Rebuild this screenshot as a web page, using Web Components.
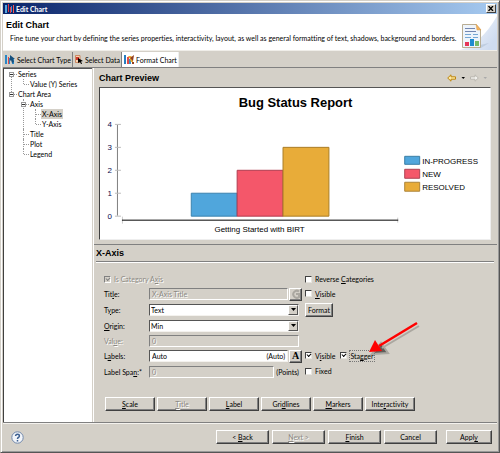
<!DOCTYPE html>
<html lang="en">
<head>
<meta charset="utf-8">
<title>Edit Chart</title>
<style>
  html, body { margin: 0; min-height: 100%; background: #d4d0c8; }
  body { font: 7px/10px Lato, "Noto Sans", sans-serif; font-variant-ligatures: none; color: #000; }
</style>
</head>
<body>
<edit-dialog></edit-dialog>
<script>
const base = `*{box-sizing:border-box} u{text-decoration-thickness:1px;text-underline-offset:1px}
  button,input,select{font:inherit;color:inherit;margin:0}
  h1,h2,p,ul{margin:0;padding:0;font-size:inherit;font-weight:inherit}
  svg{display:block;flex:none}`;
function define(name, css, html) {
  const t = document.createElement('template');
  t.innerHTML = `<style>${base}${css}</style>${html}`;
  customElements.define(name, class extends HTMLElement {
    constructor() {
      super();
      this.attachShadow({ mode: 'open' }).append(t.content.cloneNode(true));
    }
    connectedCallback() {
      const control = this.shadowRoot.querySelector('[data-control]');
      if (!control) return;
      control.disabled = this.hasAttribute('disabled');
      control.checked = this.hasAttribute('checked');
    }
  });
}

define('push-button', `
  :host{display:block;height:14px}
  button{display:flex;align-items:center;justify-content:center;width:100%;height:100%;padding:0;background:#d4d0c8;white-space:nowrap;
    border:1px solid;border-color:#fff #404040 #404040 #fff;box-shadow:inset -1px -1px #808080}
  button:disabled{color:#8c8983;text-shadow:1px 1px #fff}`,
  `<button type="button" data-control><span><slot></slot></span></button>`);

define('check-box', `
  :host{display:block}
  label{display:inline-flex;align-items:center;gap:3px;white-space:nowrap}
  input{appearance:none;position:relative;width:7px;height:7px;background:#fff;border:1px solid;border-color:#404040 #e8e6e0 #e8e6e0 #404040}
  input:checked::before{content:"";position:absolute;left:1px;top:0;width:3px;height:2px;border:solid #000;border-width:0 0 1px 1px;transform:rotate(-45deg)}
  input:disabled{background:#d4d0c8;border-color:#808080 #fff #fff #808080}
  input:disabled:checked::before{border-color:#808080}
  input:disabled+span{color:#8c8983;text-shadow:1px 1px #fff}
  :host([focused]) span{outline:1px dotted #777}`,
  `<label><input type="checkbox" data-control><span><slot></slot></span></label>`);

define('title-bar', `
  :host{display:flex;align-items:center;height:11px;padding:0 1px 0 2px;gap:2px;color:#fff;font-weight:bold;
    background:linear-gradient(90deg,#0a246a,#a6caf0)}
  h1{flex:1}
  button{display:grid;place-items:center;width:10px;height:9px;padding:0;background:#d4d0c8;border:1px solid;border-color:#fff #404040 #404040 #fff}`,
  `<svg width="9" height="9" viewBox="0 0 9 9" aria-hidden="true"><path fill="#55a6df" d="M0 1h2v8H0z"/><path fill="#e03c48" d="M3 0h1v8H3zM5 3h1v6H5z"/><path fill="#4b8ed0" d="M6 2h1v6H6z"/><path fill="#fa5a50" d="M8 1h1v8H8z"/></svg>
  <h1>Edit Chart</h1>
  <button type="button" aria-label="Close"><svg width="6" height="5" viewBox="0 0 6 5"><path d="M.5 0 5 5M5 0 .5 5" stroke="#000" stroke-width="1.3"/></svg></button>`);

define('dialog-header', `
  :host{display:flex;justify-content:space-between;align-items:flex-end;height:37px;background:#fff;border-bottom:1px solid #f0eee9}
  div{flex:1;min-width:0;padding:0 0 7px 3px}
  h2{font:bold 9px/12px "Liberation Sans",sans-serif;margin-bottom:2px}
  p{padding-left:4px;white-space:nowrap}`,
  `<div><h2>Edit Chart</h2><p>Fine tune your chart by defining the series properties, interactivity, layout, as well as general formatting of text, shadows, background and borders.</p></div>
  <svg width="42" height="34" viewBox="0 0 42 34" aria-hidden="true">
    <defs><linearGradient id="g" x1="0" y1="0" x2="1" y2=".6"><stop offset="0" stop-color="#fff"/><stop offset="1" stop-color="#cfdcf0"/></linearGradient></defs>
    <path fill="url(#g)" d="M42 0v34H5Q26 28 42 0z"/><path fill="#a5b5cc" opacity=".45" d="m25 29 9-2-8 5H9z"/>
    <path fill="#eef4fb" stroke="#b9ad93" d="M7.500 8.500H21l4.500 5V31.500h-18z"/><path fill="#f5b45c" stroke="#d89b4d" stroke-width=".5" d="m21 8 5 6h-4z"/>
    <path fill="#7386b0" d="M10 12h10v1H10zm0 3h11v1H10z"/><path fill="#76a7d4" d="M10 18h6v1h-6zm8 0h5v1h-5zm-8 3h6v1h-6zm8 0h5v1h-5z"/>
    <path fill="#e63558" d="M10 26h4v4h-4z"/><path fill="#1e8bd0" d="M15 23h4v7h-4z"/><path fill="#75ba68" d="M20 25h4v5h-4z"/>
  </svg>`);

define('tab-strip', `
  :host{display:flex;height:17px;padding-top:1px;border-bottom:1px solid #808080}
  button{display:flex;align-items:center;gap:2px;height:15px;border:0;border-right:1px solid #808080;background:none;padding:0 1px 0 2px;white-space:nowrap}
  button[aria-selected=true]{background:#fff;border-color:#eee}`,
  `<button type="button" role="tab"><svg width="10" height="9" viewBox="0 0 10 9"><path fill="#2a86c5" d="M0 0h2v9H0z"/><path fill="#e0464a" d="M3 2h1v7H3z"/><path fill="#2a86c5" d="M4 3h1v6H4zM7 4h2v5H7z"/><path fill="#164f7c" d="m5 0 5 4H8l1 3-2 1-1-3-1 1z"/></svg>Select Chart Type</button>
  <button type="button" role="tab"><svg width="8" height="9" viewBox="0 0 8 9"><path fill="#f8d4b5" stroke="#c7774a" stroke-width=".8" d="M.5.500h4.500v7H.5z"/><path fill="#d03c31" d="M1 2h3v3H1z"/><path d="m3 3 5 3-2 .5L7 9H6L5 7 3 8z"/></svg>Select Data</button>
  <button type="button" role="tab" aria-selected="true"><svg width="10" height="9" viewBox="0 0 10 9"><path fill="#297ec0" d="M0 0h2v9H0z"/><path fill="#e24c46" d="M3 2h2v7H3z"/><path fill="#3593c9" d="M5 4h2v5H5z"/><path fill="#edab2d" d="M4 1h3l2 2v4H7L6 4z"/><path fill="#923e20" d="m6 3 4-3-1 6zM8 7h2v2H8z"/></svg>Format Chart</button>`);

define('tree-view', `
  :host{display:block;background:#fff;border-left:1px solid #404040;border-top:1px solid #555;padding-left:5px}
  ul{list-style:none} li{position:relative}
  ul ul{padding-left:12px}
  li>span{display:inline-block;height:10px;margin-left:8px;padding:0 1px;white-space:nowrap}
  li::before{content:"";position:absolute;left:2px;top:0;height:100%;border-left:1px dotted #999}
  li:last-child::before{height:5px}
  li::after{content:"";position:absolute;left:3px;top:5px;width:5px;border-top:1px dotted #999}
  .root>li:first-child::before{top:5px}
  i{position:absolute;z-index:1;left:0;top:3px;width:5px;height:5px;background:#fff;border:1px solid #999}
  i::after{content:"";position:absolute;left:0;right:0;top:1px;height:1px;background:#333}
  .sel{background:#d4d0c8}`,
  `<ul class="root" role="tree">
    <li><i></i><span>Series</span><ul><li><span>Value (Y) Series</span></li></ul></li>
    <li><i></i><span>Chart Area</span><ul>
      <li><i></i><span>Axis</span><ul><li><span class="sel">X-Axis</span></li><li><span>Y-Axis</span></li></ul></li>
      <li><span>Title</span></li><li><span>Plot</span></li><li><span>Legend</span></li></ul></li>
  </ul>`);

define('chart-preview', `
  :host{display:block;padding:0 6px 4px 5px;border-bottom:1px solid #808080}
  header{display:flex;align-items:center;height:19px;padding-right:2px}
  h2{flex:1;font:bold 9px/12px "Liberation Sans",sans-serif}
  .canvas{background:#fff;border:1px solid;border-color:#555 #eee #eee #404040}
  .canvas svg{width:100%;height:auto}
  text{font:8px "Liberation Sans",Arial,sans-serif}
  .num text{fill:#0a0a50;text-anchor:end}
  .title{font-size:13px;font-weight:bold}`,
  `<header><h2>Chart Preview</h2>
    <svg width="42" height="8" viewBox="0 0 42 8" aria-hidden="true"><path fill="#ffeaa0" stroke="#bd8510" d="M.7 4 4 .8v2h4.500v2.400H4v2z"/><path d="M14.500 3h3.500l-1.750 2z"/><path fill="#f1f0ec" stroke="#bab7b0" d="M31.300 4 28 .8v2h-4.500v2.400H28v2z"/><path fill="#aaa" d="M36.500 3h3.500l-1.750 2z"/></svg>
  </header>
  <div class="canvas"><svg viewBox="0 0 391 151" role="img" aria-label="Bug Status Report">
    <text class="title" x="196" y="19" text-anchor="middle">Bug Status Report</text>
    <path d="M17.500 37v91" stroke="#808080" fill="none"/><path d="M15 36.500h6M15 59.500h6M15 82.500h6M15 105.500h6M15 128.500h6" stroke="#bbb"/>
    <g class="num"><text x="12" y="39">4</text><text x="12" y="62">3</text><text x="12" y="85">2</text><text x="12" y="108">1</text><text x="12" y="131">0</text></g>
    <path fill="#50a6dc" stroke="#3b83ae" d="M91.500 105.500h46v23h-46z"/><path fill="#f4576a" stroke="#b03c50" d="M137.500 82.500h46v46h-46z"/><path fill="#e8ac39" stroke="#aa7d26" d="M183.500 59.500h46v69h-46z"/>
    <path d="M22.500 129v7M298.500 130v5" stroke="#ccc"/><path d="M22 132.500h277" stroke="#000"/>
    <text x="160" y="144" text-anchor="middle">Getting Started with BIRT</text>
    <path fill="#50a6dc" stroke="#397da6" d="M305.500 68.500h15v8h-15z"/><path fill="#f4576a" stroke="#ad4354" d="M305.500 81.500h15v9h-15z"/><path fill="#e8ac39" stroke="#ac8439" d="M305.500 94.500h15v9h-15z"/>
    <text x="323" y="76">IN-PROGRESS</text><text x="323" y="89">NEW</text><text x="323" y="102">RESOLVED</text>
  </svg></div>`);

define('axis-form', `
  :host{display:block;padding:0 3px 0 2px}
  h2{font:bold 9px/12px "Liberation Sans",sans-serif;padding:2px 0;border-bottom:1px solid #808080;box-shadow:0 1px #fff}
  form{display:grid;grid-template-columns:45px 150px 1fr;grid-template-rows:14px 15px 16px 16px 15px 15px 16px;column-gap:3px;align-items:center;padding:11px 0 0 8px}
  .wide{grid-column:1/3}
  .end{grid-column:3}
  .field{display:flex;align-items:center;gap:1px;height:12px;margin-left:-3px}
  .box{display:flex;flex:1;min-width:0;height:12px;background:#fff;border:1px solid;border-color:#555 #f4f2ee #f4f2ee #555;padding:0 2px}
  .box input{flex:1;width:100%;min-width:0;height:10px;padding:0;border:0;background:none;outline:0}
  .off{background:#d4d0c8;border-color:#808080 #fff #fff #808080}
  .short{margin-right:3px}
  input:disabled,.dis{color:#8c8983;text-shadow:1px 1px #fff}
  .combo{display:grid;grid-template-columns:1fr 10px;padding:0;align-items:center}
  select{grid-area:1/1/2/3;appearance:none;width:100%;height:10px;border:0;background:none;padding:0 1px;outline:0}
  .combo i{grid-area:1/2;display:grid;place-items:center;height:10px;background:#d4d0c8;border:1px solid;border-color:#fff #555 #555 #fff;pointer-events:none}
  .mini{flex:none;width:13px;height:13px}
  .mini b{font:bold 10px/10px "Liberation Serif",serif}
  .pair{display:flex;gap:5px}
  .target{position:relative}
  .target svg{position:absolute;left:29px;bottom:4px;overflow:visible;pointer-events:none}
  .fmt{width:28px}
  nav{display:flex;gap:2px;padding:17px 0 8px 9px}
  nav push-button{width:50px}`,
  `<h2>X-Axis</h2>
  <form>
    <check-box class="wide" checked disabled>Is Category A<u>x</u>is</check-box><check-box class="end">Reverse <u>C</u>ategories</check-box>
    <label for="title">Tit<u>l</u>e:</label><div class="field"><span class="box off"><input id="title" value="X-Axis Title" disabled></span><push-button class="mini" disabled aria-label="Externalize"><svg width="10" height="10" viewBox="0 0 10 10"><path fill="none" stroke="#aaa7a0" stroke-width="2" d="M8 2.500A3.500 3.500 0 1 0 8 8V5H5M8 5v4"/></svg></push-button></div><check-box class="end"><u>V</u>isible</check-box>
    <label for="type">T<u>y</u>pe:</label><div class="field short"><span class="box combo"><select id="type"><option>Text</option></select><i><svg width="5" height="3"><path d="M0 0h5L2.500 3z"/></svg></i></span></div><push-button class="end fmt">Format</push-button>
    <label for="origin"><u>O</u>rigin:</label><div class="field short"><span class="box combo"><select id="origin"><option>Min</option></select><i><svg width="5" height="3"><path d="M0 0h5L2.500 3z"/></svg></i></span></div><span></span>
    <label for="value" class="dis">Val<u>u</u>e:</label><div class="field short"><span class="box off"><input id="value" value="0" disabled></span></div><span></span>
    <label for="labels">L<u>a</u>bels:</label><div class="field"><span class="box"><input id="labels" value="Auto"><span>(Auto)</span></span><push-button class="mini"><b>A</b></push-button></div>
    <div class="end pair"><check-box checked>V<u>i</u>sible</check-box><div class="target"><check-box checked focused>Sta<u>g</u>ger</check-box><svg width="50" height="36" viewBox="0 0 50 36" aria-hidden="true"><path d="m50 5-37 22M3 33l9-11 7 10z" stroke="#8a8780" stroke-width="2" opacity=".55"/><path stroke="red" stroke-width="2.500" d="M48 2 10 25"/><path fill="red" d="m0 31 6-12 7 11z"/></svg></div></div>
    <label for="span">Label Spa<u>n</u>:*</label><div class="field short"><span class="box off"><input id="span" value="0" disabled></span><span>&nbsp;(Points)</span></div><check-box class="end">Fixed</check-box>
  </form>
  <nav><push-button><u>S</u>cale</push-button><push-button disabled><u>T</u>itle</push-button><push-button><u>L</u>abel</push-button><push-button>Gri<u>d</u>lines</push-button><push-button><u>M</u>arkers</push-button><push-button>Inte<u>r</u>activity</push-button></nav>`);

define('dialog-footer', `
  :host{display:flex;align-items:center;gap:3px;padding:7px 5px 6px 8px;border-top:1px solid #808080;box-shadow:inset 0 1px #f4f2ee}
  .help{margin-right:auto;padding:0;border:0;background:none}
  push-button{width:53px}
  .apply{width:46px;margin-left:6px}`,
  `<button class="help" type="button" aria-label="Help"><svg width="13" height="13" viewBox="0 0 13 13"><circle cx="6.500" cy="6.500" r="5.700" fill="#f2f5fa" stroke="#7188ab"/><path d="M4.600 5Q4.600 3.300 6.500 3.300T8.400 5Q8.400 6 7.300 6.500 6.500 7 6.500 8M6.500 9v1.500" fill="none" stroke="#3c5f90" stroke-width="1.500"/></svg></button>
  <push-button>&lt; <u>B</u>ack</push-button><push-button disabled><u>N</u>ext &gt;</push-button><push-button><u>F</u>inish</push-button><push-button>Cancel</push-button><push-button class="apply">Appl<u>y</u></push-button>`);

define('edit-dialog', `
  :host{display:flex;flex-direction:column;min-height:100vh;box-sizing:border-box;padding:2px;background:#d4d0c8;
    border:1px solid;border-color:#d4d0c8 #555 #555 #d4d0c8;box-shadow:inset 1px 1px #fff,inset -1px -1px #999}
  main{flex:1;display:grid;grid-template-columns:89px minmax(0,1fr)}
  section{display:flex;flex-direction:column;border-left:1px solid #fff;margin-left:1px}
  axis-form{flex:1}`,
  `<title-bar></title-bar><dialog-header></dialog-header><tab-strip></tab-strip>
  <main><tree-view></tree-view><section><chart-preview></chart-preview><axis-form></axis-form></section></main>
  <dialog-footer></dialog-footer>`);
</script>
</body>
</html>
